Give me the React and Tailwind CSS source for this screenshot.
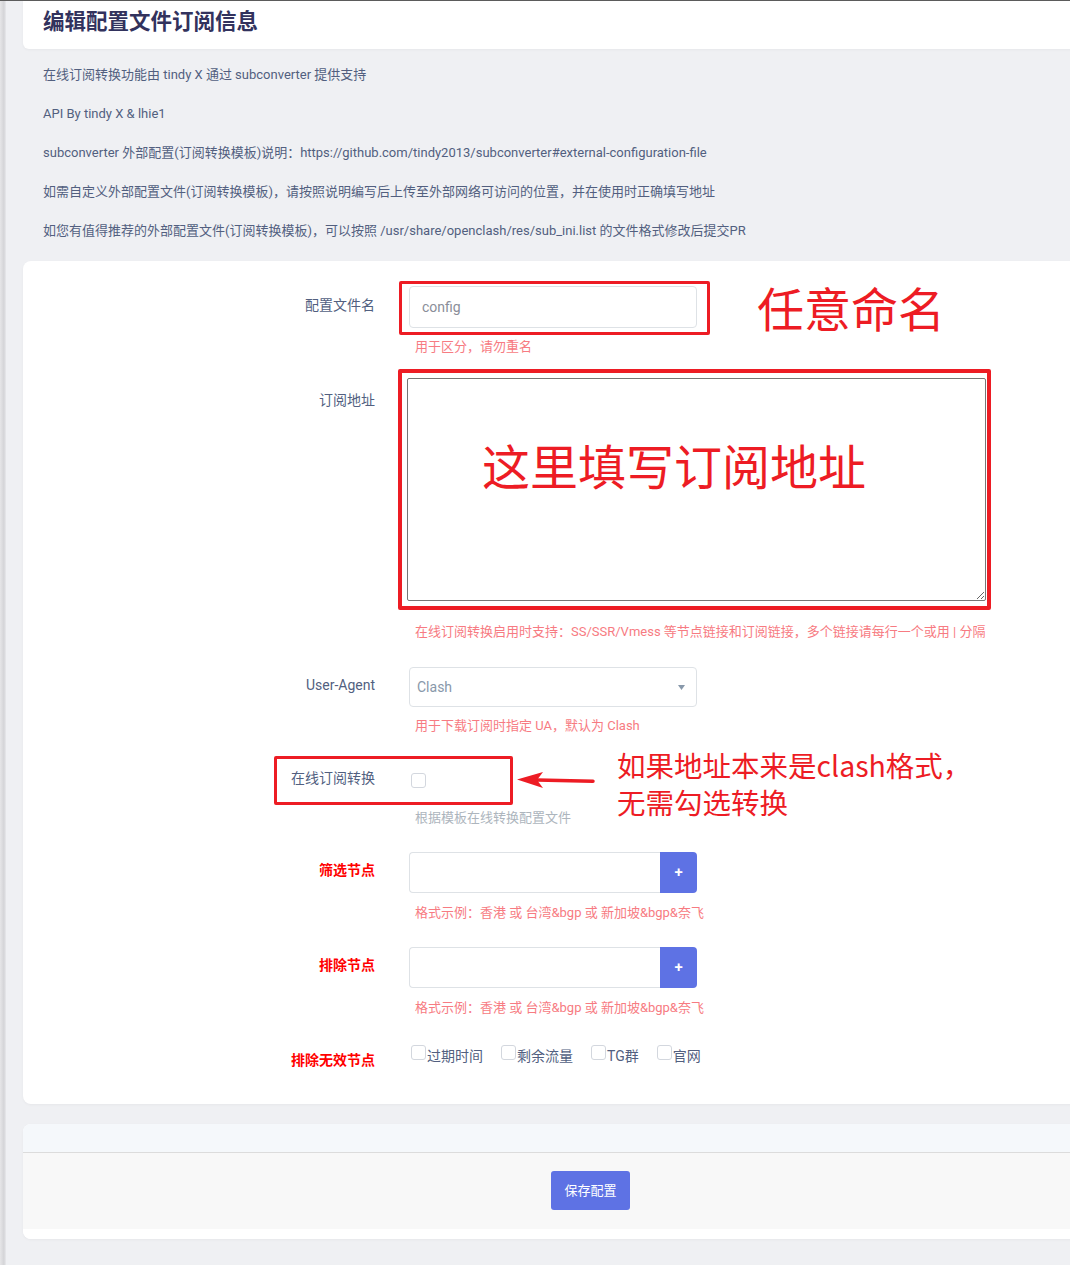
import React from "react";

function Box({ className = "" }) {
  return (
    <span
      className={`inline-block w-[15px] h-[15px] rounded-[3px] border border-[#d3d7de] bg-white shrink-0 ${className}`}
    />
  );
}

function Label({ children, className = "" }) {
  return (
    <div
      className={`w-[352px] shrink-0 text-right text-[14px] leading-[20px] ${className}`}
    >
      {children}
    </div>
  );
}

function Hint({ children, className = "" }) {
  return (
    <p className={`ml-[6px] text-[13px] leading-[18px] whitespace-nowrap ${className}`}>
      {children}
    </p>
  );
}

function InputGroup() {
  return (
    <div className="flex w-[288px] h-[41px]">
      <input className="w-[251px] h-full border border-[#dee2e6] border-r-0 rounded-l-[4px] bg-white outline-none" />
      <button className="w-[37px] h-full bg-[#5e72e4] rounded-r-[4px] text-white text-[15px] font-semibold leading-none">
        +
      </button>
    </div>
  );
}

export default function App() {
  const red = "text-[#f77b82]";
  return (
    <div className="relative w-[1070px] h-[1265px] overflow-hidden bg-[#eff0f3] font-['Roboto','Noto_Sans_CJK_SC',sans-serif] text-[#525f7f]">
      <div className="h-[1px] bg-[#5c5c5c]" />
      <div className="flex h-[1264px]">
        <div className="w-[6px] shrink-0 bg-[linear-gradient(to_right,#e6e6e8,#d4d4d7_65%,#e8e9ec)]" />
        <div className="flex-1 pl-[17px]">
          {/* header */}
          <div className="w-[1135px] h-[48px] bg-white rounded-bl-[6px] pl-[20px] pt-[7px] shadow-[0_1px_3px_rgba(0,0,0,0.04)]">
            <h1 className="text-[21.5px] leading-[28px] font-bold text-[#32325d]">
              编辑配置文件订阅信息
            </h1>
          </div>

          {/* descriptions */}
          <div className="pl-[20px] pt-[17px] flex flex-col gap-[21px] text-[13px] leading-[18px] text-[#525f7f]">
            <p>在线订阅转换功能由 tindy X 通过 subconverter 提供支持</p>
            <p>API By tindy X &amp; lhie1</p>
            <p>
              subconverter 外部配置(订阅转换模板)说明：https://github.com/tindy2013/subconverter#external-configuration-file
            </p>
            <p>
              如需自定义外部配置文件(订阅转换模板)，请按照说明编写后上传至外部网络可访问的位置，并在使用时正确填写地址
            </p>
            <p>
              如您有值得推荐的外部配置文件(订阅转换模板)，可以按照 /usr/share/openclash/res/sub_ini.list 的文件格式修改后提交PR
            </p>
          </div>

          {/* form card */}
          <div className="mt-[21px] w-[1135px] bg-white rounded-l-[8px] pt-[25px] pb-[34px] shadow-[0_1px_3px_rgba(0,0,0,0.04)]">
            {/* row 1 */}
            <div className="flex">
              <Label className="pt-[9px]">配置文件名</Label>
              <div className="ml-[34px]">
                <input
                  placeholder="config"
                  className="w-[288px] h-[42px] border border-[#dee2e6] rounded-[4px] pl-[12px] text-[14px] bg-white outline-none placeholder:text-[#8a8e99]"
                />
                <Hint className={`mt-[10px] ${red}`}>用于区分，请勿重名</Hint>
              </div>
            </div>

            {/* row 2 */}
            <div className="flex mt-[22px]">
              <Label className="pt-[12px]">订阅地址</Label>
              <div className="ml-[34px]">
                <textarea className="block ml-[-2px] w-[579px] h-[223px] border border-[#767676] rounded-[2px] bg-white outline-none resize" />
                <Hint className={`mt-[22px] ${red}`}>
                  在线订阅转换启用时支持：SS/SSR/Vmess 等节点链接和订阅链接，多个链接请每行一个或用 | 分隔
                </Hint>
              </div>
            </div>

            {/* row 3 */}
            <div className="flex mt-[26px]">
              <Label className="pt-[8px]">User-Agent</Label>
              <div className="ml-[34px]">
                <div className="w-[288px] h-[40px] border border-[#dee2e6] rounded-[4px] flex items-center justify-between pl-[7px] pr-[11px]">
                  <span className="text-[14px] text-[#8898aa]">Clash</span>
                  <svg width="7" height="5" viewBox="0 0 7 5">
                    <path d="M0 0 L7 0 L3.5 5 Z" fill="#8898aa" />
                  </svg>
                </div>
                <Hint className={`mt-[10px] ${red}`}>用于下载订阅时指定 UA，默认为 Clash</Hint>
              </div>
            </div>

            {/* row 4 */}
            <div className="flex mt-[31px]">
              <Label className="pt-[2px]">在线订阅转换</Label>
              <div className="ml-[34px]">
                <div className="h-[24px] flex items-center">
                  <Box className="ml-[2px] mt-[4px]" />
                </div>
                <Hint className="mt-[19px] text-[#adb5bd]">根据模板在线转换配置文件</Hint>
              </div>
            </div>

            {/* row 5 */}
            <div className="flex mt-[25px]">
              <Label className="pt-[8px] font-bold text-[#ff0000]">筛选节点</Label>
              <div className="ml-[34px]">
                <InputGroup />
                <Hint className={`mt-[11px] ${red}`}>
                  格式示例：香港 或 台湾&amp;bgp 或 新加坡&amp;bgp&amp;奈飞
                </Hint>
              </div>
            </div>

            {/* row 6 */}
            <div className="flex mt-[25px]">
              <Label className="pt-[8px] font-bold text-[#ff0000]">排除节点</Label>
              <div className="ml-[34px]">
                <InputGroup />
                <Hint className={`mt-[11px] ${red}`}>
                  格式示例：香港 或 台湾&amp;bgp 或 新加坡&amp;bgp&amp;奈飞
                </Hint>
              </div>
            </div>

            {/* row 7 */}
            <div className="flex mt-[28px]">
              <Label className="pt-[5px] font-bold text-[#ff0000]">排除无效节点</Label>
              <div className="ml-[34px] flex items-start text-[14px] leading-[20px] text-[#525f7f]">
                {["过期时间", "剩余流量", "TG群", "官网"].map((t) => (
                  <div key={t} className="flex items-start ml-[2px] mr-[16px]">
                    <Box />
                    <span className="pt-[1px] ml-[1px]">{t}</span>
                  </div>
                ))}
              </div>
            </div>
          </div>

          {/* footer card */}
          <div className="mt-[20px] w-[1135px] bg-white rounded-l-[8px] overflow-hidden shadow-[0_1px_3px_rgba(0,0,0,0.04)]">
            <div className="h-[29px] bg-[#f5f8fb] border-b border-[#dcdcdc]" />
            <div className="h-[76px] bg-[#f8f8f8] flex justify-center pt-[18px]">
              <button className="w-[79px] h-[39px] bg-[#5e72e4] rounded-[3px] text-white text-[13px]">
                保存配置
              </button>
            </div>
            <div className="h-[10px] bg-white" />
          </div>
        </div>
      </div>

      {/* annotations */}
      <div className="absolute left-[399px] top-[281px] w-[311px] h-[54px] border-[3px] border-[#ed1c24] rounded-[2px]" />
      <div className="absolute left-[757px] top-[283px] text-[47px] leading-none text-[#ed1c24] font-['Noto_Sans_CJK_SC',sans-serif] whitespace-nowrap">
        任意命名
      </div>
      <div className="absolute left-[398px] top-[369px] w-[593px] h-[241px] border-[4px] border-[#ed1c24] rounded-[2px]" />
      <div className="absolute left-[482px] top-[440px] text-[48px] leading-none text-[#ed1c24] font-['Noto_Sans_CJK_SC',sans-serif] whitespace-nowrap">
        这里填写订阅地址
      </div>
      <div className="absolute left-[274px] top-[756px] w-[239px] h-[49px] border-[3px] border-[#ed1c24] rounded-[2px]" />
      <svg className="absolute left-[515px] top-[770px]" width="82" height="20" viewBox="0 0 82 20">
        <path d="M78 11.2 L22 10" stroke="#ed1c24" strokeWidth="3.5" strokeLinecap="round" fill="none" />
        <path d="M2 9.5 L28 2 L22 10 L28 18 Z" fill="#ed1c24" />
      </svg>
      <div className="absolute left-[617px] top-[751px] text-[28.5px] leading-none text-[#ed1c24] font-['Noto_Sans_CJK_SC',sans-serif] whitespace-nowrap">
        如果地址本来是clash格式，
      </div>
      <div className="absolute left-[617px] top-[788px] text-[28.5px] leading-none text-[#ed1c24] font-['Noto_Sans_CJK_SC',sans-serif] whitespace-nowrap">
        无需勾选转换
      </div>
    </div>
  );
}
